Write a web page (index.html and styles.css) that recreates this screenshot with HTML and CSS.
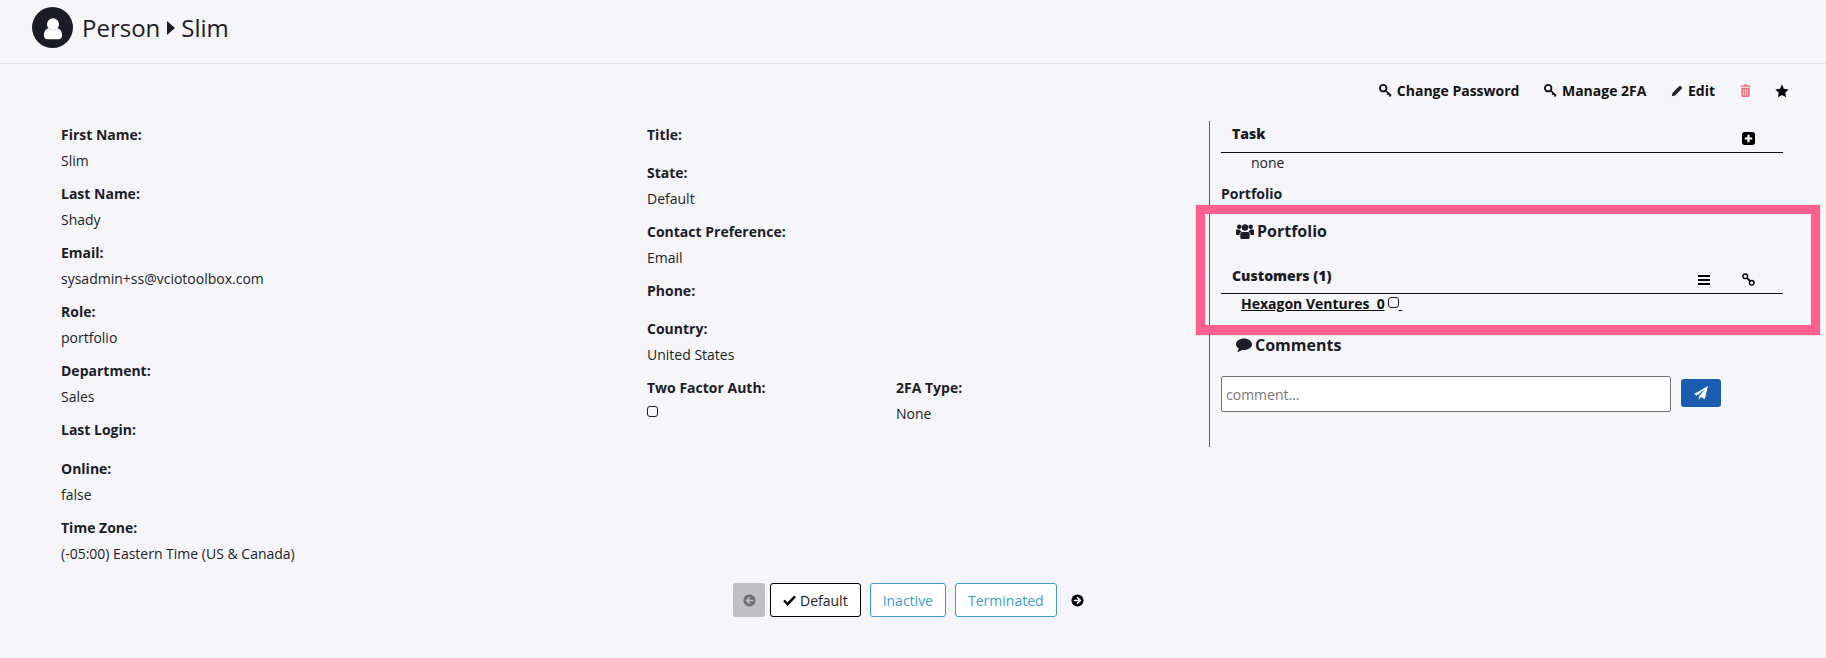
FILE: index.html
```html
<!DOCTYPE html>
<html lang="en">
<head>
<meta charset="utf-8">
<title>Person Slim</title>
<link rel="stylesheet" href="styles.css">
</head>
<body>
<header class="topbar">
  <span class="avatar"><svg viewBox="0 0 20 24" width="20" height="24"><circle cx="10" cy="8.300" r="6" fill="#fff"/><path d="M1 20v-2c0-3 2-5 4.500-5.700C7 13.500 8.300 14.300 10 14.300s3-.8 4.500-2c2.500.7 4.500 2.700 4.500 5.700v2c0 1.800-1.500 3.300-3.300 3.300H4.300C2.500 23.300 1 21.800 1 20z" fill="#fff"/></svg></span>
  <h1 class="crumb">Person<svg class="crumb-arrow" viewBox="0 0 8 14" width="8" height="14"><path d="M0 0l8 7-8 7z" fill="#1c1c28"/></svg>Slim</h1>
</header>
<nav class="actions">
  <a class="action"><svg viewBox="0 0 14 14" width="13" height="13"><circle cx="4.500" cy="4.500" r="3.500" fill="none" stroke="#111" stroke-width="2"/><path d="M7 7L13 12.500M10.200 9.800l-1.400 1.700M12.400 11.800l-1.200 1.600" stroke="#111" stroke-width="1.800" fill="none"/></svg>Change Password</a>
  <a class="action"><svg viewBox="0 0 14 14" width="13" height="13"><circle cx="4.500" cy="4.500" r="3.500" fill="none" stroke="#111" stroke-width="2"/><path d="M7 7L13 12.500M10.200 9.800l-1.400 1.700M12.400 11.800l-1.200 1.600" stroke="#111" stroke-width="1.800" fill="none"/></svg>Manage 2FA</a>
  <a class="action"><svg viewBox="0 0 14 14" width="12" height="12"><path d="M1 13l.8-3.800L9.500 1.500c.6-.6 1.500-.6 2 0l1 1c.6.6.6 1.400 0 2L4.800 12.200z" fill="#222"/></svg>Edit</a>
  <a class="action"><svg viewBox="0 0 12 14" width="11" height="13"><path d="M4 1.500V.5h4v1h3.500v1.500H.5V1.500zM1.500 4h9v8.500c0 .8-.6 1.500-1.400 1.500H2.900c-.8 0-1.400-.7-1.400-1.500z" fill="#ee6d76"/><path d="M4 5.500v7M6 5.500v7M8 5.500v7" stroke="#f5f5fa" stroke-width=".9"/></svg></a>
  <a class="action"><svg viewBox="0 0 24 24" width="14" height="14"><path d="M12 1l3.400 7.300 7.900 1-5.800 5.500 1.500 7.900-7-3.900-7 3.900 1.500-7.900L.7 9.300l7.900-1z" fill="#000"/></svg></a>
</nav>
<main class="content">
  <section class="col col-left">
    <div class="field"><b>First Name:</b><span>Slim</span></div>
    <div class="field"><b>Last Name:</b><span>Shady</span></div>
    <div class="field"><b>Email:</b><span>sysadmin+ss@vciotoolbox.com</span></div>
    <div class="field"><b>Role:</b><span>portfolio</span></div>
    <div class="field"><b>Department:</b><span>Sales</span></div>
    <div class="field field-empty"><b>Last Login:</b></div>
    <div class="field"><b>Online:</b><span>false</span></div>
    <div class="field"><b>Time Zone:</b><span>(-05:00) Eastern Time (US &amp; Canada)</span></div>
  </section>
  <section class="col col-mid">
    <div class="field field-empty"><b>Title:</b></div>
    <div class="field"><b>State:</b><span>Default</span></div>
    <div class="field"><b>Contact Preference:</b><span>Email</span></div>
    <div class="field field-empty"><b>Phone:</b></div>
    <div class="field"><b>Country:</b><span>United States</span></div>
    <div class="pair">
      <div class="field"><b>Two Factor Auth:</b><i class="check check-block"></i></div>
      <div class="field"><b>2FA Type:</b><span>None</span></div>
    </div>
  </section>
  <aside class="side">
    <div class="rule-head task-head"><b>Task</b><svg viewBox="0 0 14 14" width="13" height="13"><rect width="14" height="14" rx="3" fill="#000"/><path d="M7 3v8M3 7h8" stroke="#fff" stroke-width="2.400"/></svg></div>
    <div class="none">none</div>
    <div class="portfolio-label">Portfolio</div>
    <h2 class="side-title"><svg viewBox="0 0 18 15" width="18" height="15"><g fill="#1c1c28"><circle cx="3.300" cy="2.800" r="2.300"/><circle cx="14.700" cy="2.800" r="2.300"/><circle cx="9" cy="3.500" r="3.200"/><path d="M0 6.500c0-.6.400-1 1-1h2.600c.5 1 1.200 1.700 2 2.200C4.300 8.200 3.400 9.400 3.400 11H1c-.6 0-1-.4-1-1zM18 6.500c0-.6-.4-1-1-1h-2.600c-.5 1-1.200 1.700-2 2.200 1.300.5 2.200 1.700 2.200 3.300H17c.6 0 1-.4 1-1z"/><path d="M6 8h6c1.100 0 1.700 1 1.700 2.200v3.300c0 .9-.6 1.500-1.500 1.500H5.800c-.9 0-1.500-.6-1.500-1.500v-3.300C4.300 9 4.900 8 6 8z"/></g></svg>Portfolio</h2>
    <div class="rule-head cust-head"><b>Customers (1)</b>
      <span class="cust-icons">
        <svg viewBox="0 0 12 10" width="12" height="10"><path d="M0 1h12M0 5h12M0 9h12" stroke="#000" stroke-width="1.800"/></svg>
        <svg viewBox="0 0 14 14" width="13" height="13"><g fill="none" stroke="#000" stroke-width="1.500"><circle cx="3.500" cy="3.500" r="2.500"/><circle cx="10.500" cy="10.500" r="2.500"/><path d="M5.500 5.500l3 3" stroke-width="2.200"/></g></svg>
      </span>
    </div>
    <a class="customer">Hexagon Ventures&nbsp; 0<i class="check"></i>&nbsp;</a>
    <h2 class="side-title comments-title"><svg viewBox="0 0 16 14" width="16" height="14"><path d="M8 .5c4.400 0 8 2.600 8 5.800s-3.600 5.800-8 5.800c-.8 0-1.500-.1-2.200-.2C4.600 13 3 13.800 1 13.800c.9-.9 1.600-2 1.800-3.100C1.100 9.600 0 8 0 6.300 0 3.100 3.600.5 8 .5z" fill="#1c1c28"/></svg>Comments</h2>
    <div class="comment-row">
      <input class="comment-input" type="text" placeholder="comment...">
      <button class="send" type="button" aria-label="Send"><svg viewBox="0 0 14 14" width="14" height="14"><path d="M14 0L10.800 13 6.800 11 4.800 14V10.400L11.500 3 3 9.600 0 8z" fill="#fff"/></svg></button>
    </div>
  </aside>
</main>
<div class="states">
  <button class="back" type="button" aria-label="Back"><svg viewBox="0 0 14 14" width="13" height="13"><circle cx="7" cy="7" r="6.500" fill="#6f6f6f"/><path d="M7.500 3.500L4 7l3.500 3.500M4.500 7H11" stroke="#c0c0c4" stroke-width="1.800" fill="none"/></svg></button>
  <button class="state state-on" type="button"><svg viewBox="0 0 14 12" width="13" height="11"><path d="M1 6l4 4 8-8.500" stroke="#000" stroke-width="2.600" fill="none"/></svg>Default</button>
  <button class="state" type="button">Inactive</button>
  <button class="state" type="button">Terminated</button>
  <span class="next"><svg viewBox="0 0 14 14" width="13" height="13"><circle cx="7" cy="7" r="6.500" fill="#000"/><path d="M6.500 3.500L10 7l-3.500 3.500M9.500 7H3" stroke="#fff" stroke-width="1.800" fill="none"/></svg></span>
</div>
<div class="highlight" aria-hidden="true"></div>
</body>
</html>
```
FILE: styles.css
```css
* { box-sizing: border-box; }
html, body { margin: 0; padding: 0; }
body {
  position: relative;
  height: 658px;
  overflow: hidden;
  background: #f5f5fa;
  color: #1c1c28;
  font: 14px/19px "Open Sans", sans-serif;
}
.topbar {
  height: 64px;
  display: flex;
  align-items: center;
  gap: 9px;
  padding: 0 0 8px 32px;
  border-bottom: 1px solid #dfdfe4;
}
.avatar {
  width: 41px; height: 41px;
  border-radius: 50%;
  background: #1c1c28;
  display: flex; align-items: center; justify-content: center;
}
.crumb { margin: 0; font-size: 24px; font-weight: 400; line-height: 32px; display: flex; align-items: center; }
.crumb-arrow { margin: 0 6px 0 7px; }
.actions {
  display: flex;
  justify-content: flex-end;
  align-items: center;
  gap: 24.5px;
  height: 27px;
  margin-top: 13px;
  padding-right: 37px;
}
.action { display: flex; align-items: center; gap: 5px; font-weight: 700; color: #111; }
.content { display: flex; margin-top: 17px; padding-left: 61px; height: 462px; }
.col { display: flex; flex-direction: column; padding-top: 4px; }
.col-left { width: 586px; }
.col-mid { width: 562px; }
.field { display: flex; flex-direction: column; margin-bottom: 14px; }
.field b { font-weight: 700; margin-bottom: 7px; }
.field-empty { margin-bottom: 12px; }
.col-left .field-empty { margin-bottom: 13px; }
.pair { display: flex; }
.pair .field { width: 249px; }
.check {
  display: inline-block;
  width: 11px; height: 11px;
  border: 1px solid #1c1c28;
  border-radius: 3px;
  background: #f5f5fa;
}
.check-block { display: block; margin-top: 2px; }
.side {
  width: 574px;
  height: 326px;
  border-left: 1px solid #2d6da3;
  padding-left: 11px;
}
.rule-head {
  display: flex;
  justify-content: space-between;
  align-items: flex-end;
  border-bottom: 1px solid #111;
  padding-left: 11px;
  padding-right: 28px;
  font-weight: 700;
}
.task-head { height: 32px; padding-bottom: 7px; }
.task-head b { margin-bottom: 2px; }
.none { padding-left: 30px; height: 31px; }
.portfolio-label { font-weight: 700; height: 36px; }
.side-title { display: flex; align-items: center; gap: 3px; margin: 0 0 0 15px; font-size: 16px; line-height: 22px; font-weight: 700; }
.cust-head { height: 29px; margin-top: 23px; padding-bottom: 7px; }
.cust-head b { margin-bottom: 1px; }
.cust-icons { display: flex; gap: 32px; align-items: center; }
.customer {
  display: block;
  margin: 0 0 0 20px;
  font-weight: 700;
  color: #111;
  text-decoration: underline;
}
.customer .check { margin-left: 3px; vertical-align: 1px; }
.comments-title { margin-top: 21px; }
.comment-row { display: flex; gap: 10px; align-items: flex-start; margin-top: 20px; }
.comment-input {
  width: 450px; height: 36px;
  border: 1px solid #767676;
  border-radius: 2px;
  background: #fff;
  padding: 0 4px;
  font: 14px "Open Sans", sans-serif;
}
.comment-input::placeholder { color: #777; }
.send {
  width: 40px; height: 28px;
  margin-top: 3px;
  border: 0; border-radius: 3px;
  background: #1a5cb0;
  display: flex; align-items: center; justify-content: center;
  padding: 0;
}
.states {
  display: flex;
  align-items: center;
  padding-left: 733px;
  gap: 9px;
}
.back {
  width: 32px; height: 34px;
  border: 0; border-radius: 3px;
  background: #c0c0c4;
  display: flex; align-items: center; justify-content: center;
  padding: 0;
  margin-right: -4px;
}
.state {
  height: 34px;
  padding: 0 12px;
  border: 1px solid #3d9bd0;
  border-radius: 3px;
  background: #fff;
  color: #3d9bd0;
  font: 14px "Open Sans", sans-serif;
  display: flex; align-items: center; gap: 4px;
}
.state-on { border-color: #000; color: #1c1c28; }
.next { display: flex; margin-left: 5px; }
.highlight {
  position: absolute;
  left: 1196px; top: 205px;
  width: 624px; height: 130px;
  border-style: solid;
  border-color: #ff6090;
  border-width: 9px 9px 10px 9px;
  box-shadow: 0 0 1px rgba(0,0,0,.35), inset 0 0 1px rgba(0,0,0,.35);
}
```
